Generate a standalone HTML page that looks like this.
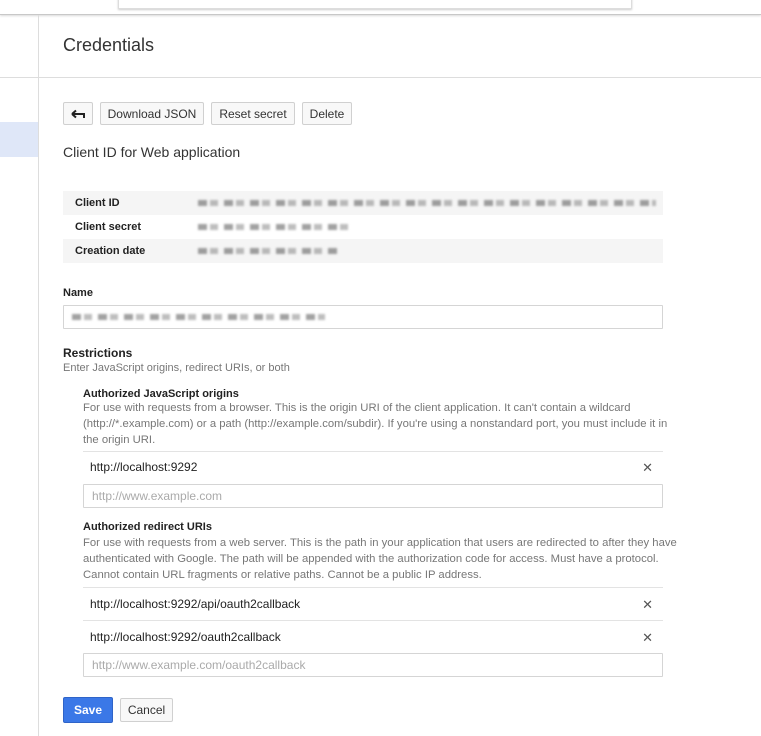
<!DOCTYPE html>
<html><head><style>
body{margin:0;width:761px;height:736px;background:#fff;font-family:"Liberation Sans",Arial,sans-serif;color:#222;position:relative;overflow:hidden}
.a{position:absolute}
.btn{position:absolute;top:102px;height:23px;border:1px solid #d0d0d0;border-radius:2px;background:#f8f8f8;font-size:12px;line-height:23px;text-align:center;color:#333;box-sizing:border-box}
.row{position:absolute;left:63px;width:600px;height:24px;font-size:11px;font-weight:bold;line-height:24px}
.row span{padding-left:12px}
.blur{position:absolute;height:6px;background:repeating-linear-gradient(90deg,#555 0 9px,transparent 9px 12px,#888 12px 20px,transparent 20px 26px);filter:blur(1px);opacity:.55}
.small{font-size:11px;color:#777;line-height:16px}
.desc{font-size:11.3px;color:#777;line-height:16px;white-space:nowrap}
.inp{position:absolute;border:1px solid #d5d5d5;box-sizing:border-box;border-radius:1px;font-size:12px;color:#aaa;padding-left:8px;line-height:22px}
.item{position:absolute;left:83px;width:580px;border-top:1px solid #e3e3e3;font-size:12px;color:#222;padding-left:7px;box-sizing:border-box}
.x{position:absolute;right:10px;color:#555;font-size:13px}
</style></head><body>
<div class="a" style="left:0;top:0;width:761px;height:14px;border-bottom:1px solid #c8c8c8;box-shadow:0 1px 2px rgba(0,0,0,.15)"></div>
<div class="a" style="left:118px;top:-4px;width:512px;height:11px;border:1px solid #ddd;box-shadow:0 1px 2px rgba(0,0,0,.2);background:#fff"></div>
<div class="a" style="left:38px;top:15px;width:1px;height:721px;background:#ddd"></div>
<div class="a" style="left:0;top:77px;width:761px;height:1px;background:#ddd"></div>
<div class="a" style="left:0;top:122px;width:38px;height:35px;background:#dfe7f8"></div>
<div class="a" style="left:63px;top:35px;font-size:18px;color:#333">Credentials</div>
<div class="btn" style="left:63px;width:30px"><svg width="14" height="10" viewBox="0 0 14 10" style="margin-top:6px"><path d="M1 5H13M1 5L5 1.5M1 5L5 8.5" stroke="#222" stroke-width="2" fill="none"/><path d="M13 4V9" stroke="#222" stroke-width="2"/></svg></div>
<div class="btn" style="left:100px;width:104px">Download JSON</div>
<div class="btn" style="left:211px;width:84px">Reset secret</div>
<div class="btn" style="left:302px;width:50px">Delete</div>
<div class="a" style="left:63px;top:144px;font-size:14px;color:#333">Client ID for Web application</div>
<div class="row" style="top:191px;background:#f5f5f5"><span>Client ID</span></div>
<div class="row" style="top:215px"><span>Client secret</span></div>
<div class="row" style="top:239px;background:#f5f5f5"><span>Creation date</span></div>
<div class="blur" style="left:198px;top:200px;width:458px"></div>
<div class="blur" style="left:198px;top:224px;width:152px"></div>
<div class="blur" style="left:198px;top:248px;width:140px"></div>
<div class="a" style="left:63px;top:287px;font-size:11px;font-weight:bold">Name</div>
<div class="inp" style="left:63px;top:305px;width:600px;height:24px"></div>
<div class="blur" style="left:72px;top:314px;width:253px"></div>
<div class="a" style="left:63px;top:346px;font-size:12px;font-weight:bold">Restrictions</div>
<div class="a small" style="left:63px;top:360px">Enter JavaScript origins, redirect URIs, or both</div>
<div class="a" style="left:83px;top:388px;font-size:11px;font-weight:bold">Authorized JavaScript origins</div>
<div class="a desc" style="left:83px;top:400px">For use with requests from a browser. This is the origin URI of the client application. It can't contain a wildcard<br>(http://*.example.com) or a path (http://example.com/subdir). If you're using a nonstandard port, you must include it in<br>the origin URI.</div>
<div class="item" style="top:451px;height:32px;line-height:31px">http://localhost:9292<span class="x">&#x2715;</span></div>
<div class="inp" style="left:83px;top:484px;width:580px;height:24px">http://www.example.com</div>
<div class="a" style="left:83px;top:521px;font-size:11px;font-weight:bold">Authorized redirect URIs</div>
<div class="a desc" style="left:83px;top:535px">For use with requests from a web server. This is the path in your application that users are redirected to after they have<br>authenticated with Google. The path will be appended with the authorization code for access. Must have a protocol.<br>Cannot contain URL fragments or relative paths. Cannot be a public IP address.</div>
<div class="item" style="top:587px;height:33px;line-height:33px">http://localhost:9292/api/oauth2callback<span class="x">&#x2715;</span></div>
<div class="item" style="top:620px;height:33px;line-height:33px">http://localhost:9292/oauth2callback<span class="x">&#x2715;</span></div>
<div class="inp" style="left:83px;top:653px;width:580px;height:24px">http://www.example.com/oauth2callback</div>
<div class="a" style="left:63px;top:697px;width:50px;height:26px;background:#3b78e7;border:1px solid #2f64c8;box-sizing:border-box;border-radius:2px;color:#fff;font-size:12px;font-weight:bold;text-align:center;line-height:24px">Save</div>
<div class="a" style="left:120px;top:698px;width:53px;height:24px;background:#f8f8f8;border:1px solid #d0d0d0;box-sizing:border-box;border-radius:2px;color:#333;font-size:12px;text-align:center;line-height:22px">Cancel</div>
</body></html>
